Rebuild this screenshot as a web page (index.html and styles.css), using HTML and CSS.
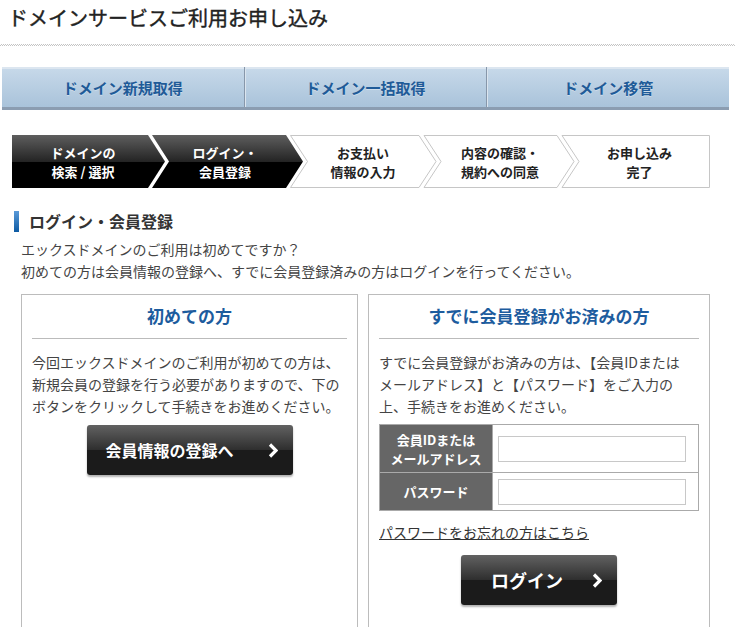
FILE: index.html
```html
<!DOCTYPE html>
<html lang="ja">
<head>
<meta charset="utf-8">
<title>ドメインサービスご利用お申し込み</title>
<link rel="stylesheet" href="styles.css">
</head>
<body>
<div class="page">
  <h1 class="page-title">ドメインサービスご利用お申し込み</h1>
  <div class="dots"></div>

  <nav class="tabs">
    <a class="tab" href="#">ドメイン新規取得</a>
    <a class="tab" href="#">ドメイン一括取得</a>
    <a class="tab" href="#">ドメイン移管</a>
  </nav>

  <div class="steps">
    <svg class="steps-bg" width="698" height="53" viewBox="0 0 698 53">
      <defs>
        <linearGradient id="stepDark" x1="0" y1="0" x2="0" y2="1">
          <stop offset="0" stop-color="#5e5e5e"/>
          <stop offset="0.5" stop-color="#242424"/>
          <stop offset="0.5" stop-color="#000"/>
          <stop offset="1" stop-color="#000"/>
        </linearGradient>
      </defs>
      <polygon points="0,0 136,0 153,26.5 136,53 0,53" fill="url(#stepDark)"/>
      <polygon points="140,0 274,0 291,26.5 274,53 140,53 157,26.5" fill="url(#stepDark)"/>
      <g fill="#fff" stroke="#c6c6c6">
        <polygon points="278.5,0.5 407,0.5 424,26.5 407,52.5 278.5,52.5 295.5,26.5"/>
        <polygon points="412,0.5 545,0.5 562,26.5 545,52.5 412,52.5 429,26.5"/>
        <polygon points="550,0.5 697.5,0.5 697.5,52.5 550,52.5 567,26.5"/>
      </g>
    </svg>
    <ol class="step-list">
      <li class="step is-done"><span class="step-line">ドメインの</span><span class="step-line">検索 / 選択</span></li>
      <li class="step is-done"><span class="step-line">ログイン・</span><span class="step-line">会員登録</span></li>
      <li class="step"><span class="step-line">お支払い</span><span class="step-line">情報の入力</span></li>
      <li class="step"><span class="step-line">内容の確認・</span><span class="step-line">規約への同意</span></li>
      <li class="step"><span class="step-line">お申し込み</span><span class="step-line">完了</span></li>
    </ol>
  </div>

  <h2 class="section-title">ログイン・会員登録</h2>
  <p class="intro">エックスドメインのご利用は初めてですか？<br>初めての方は会員情報の登録へ、すでに会員登録済みの方はログインを行ってください。</p>

  <div class="cols">
    <section class="box box-new">
      <h3 class="box-title">初めての方</h3>
      <p class="box-text">今回エックスドメインのご利用が初めての方は、<br>新規会員の登録を行う必要がありますので、下の<br>ボタンをクリックして手続きをお進めください。</p>
      <div class="btn-row">
        <a class="btn btn-register" href="#"><span>会員情報の登録へ</span><svg class="chev" width="10" height="15" viewBox="0 0 10 15"><polyline points="2,1.5 8,7.5 2,13.5" fill="none" stroke="#fff" stroke-width="3.2"/></svg></a>
      </div>
    </section>

    <section class="box box-member">
      <h3 class="box-title">すでに会員登録がお済みの方</h3>
      <p class="box-text">すでに会員登録がお済みの方は、【会員IDまたは<br>メールアドレス】と【パスワード】をご入力の<br>上、手続きをお進めください。</p>
      <table class="login-table">
        <tr class="row-id">
          <th><span class="th-line">会員IDまたは</span><span class="th-line">メールアドレス</span></th>
          <td><input class="field" type="text"></td>
        </tr>
        <tr class="row-pw">
          <th>パスワード</th>
          <td><input class="field" type="password"></td>
        </tr>
      </table>
      <p class="forgot-line"><a class="forgot" href="#">パスワードをお忘れの方はこちら</a></p>
      <div class="btn-row btn-row-login">
        <a class="btn btn-login" href="#"><span>ログイン</span><svg class="chev" width="10" height="15" viewBox="0 0 10 15"><polyline points="2,1.5 8,7.5 2,13.5" fill="none" stroke="#fff" stroke-width="3.2"/></svg></a>
      </div>
    </section>
  </div>
</div>
</body>
</html>
```

FILE: styles.css
```css
* {
  box-sizing: border-box;
}

body {
  margin: 0;
  background: #fff;
  color: #333;
  font-family: "Noto Sans CJK JP", "Noto Sans", sans-serif;
}

.page {
  height: 627px;
  overflow: hidden;
}

.page-title {
  margin: 0;
  padding: 3px 0 0 8px;
  font-size: 20px;
  line-height: 30px;
  font-weight: normal;
  color: #222;
  -webkit-text-stroke: 0.4px #222;
}

.dots {
  margin-top: 11px;
  width: 735px;
  height: 2px;
  background: conic-gradient(#c4c4c4 25%, #fff 0 50%, #c4c4c4 0 75%, #fff 0);
  background-size: 2px 2px;
}

/* tabs */
.tabs {
  display: flex;
  margin: 21px 0 0 2px;
  width: 727px;
  height: 43px;
  border-bottom: 3px solid #8b9db1;
  background: linear-gradient(#dce6f0 0, #dce6f0 2px, #c6d8e9 2px, #a9c3da 100%);
}

.tab {
  flex: 1;
  display: flex;
  align-items: center;
  justify-content: center;
  font-size: 15px;
  font-weight: bold;
  color: #1f5b98;
  text-decoration: none;
  text-shadow: 0 1px 0 rgba(255, 255, 255, 0.35);
}

.tab + .tab {
  border-left: 1px solid #8797aa;
  box-shadow: inset 1px 0 0 #dbe5ef;
}

/* steps */
.steps {
  display: grid;
  margin: 25px 0 0 12px;
  width: 698px;
  height: 53px;
}

.steps-bg,
.step-list {
  grid-area: 1 / 1;
}

.step-list {
  display: grid;
  grid-template-columns: 142px 142px 134px 140px 139px;
  margin: 0;
  padding: 0;
  list-style: none;
}

.step {
  display: flex;
  flex-direction: column;
  align-items: center;
  justify-content: center;
  text-align: center;
  font-size: 13px;
  font-weight: bold;
  color: #222;
}

.step-line {
  display: block;
  height: 19px;
  line-height: 19px;
  white-space: nowrap;
}

.step.is-done {
  color: #fff;
}

/* section heading */
.section-title {
  display: flex;
  align-items: center;
  gap: 10px;
  margin: 22px 0 0 14px;
  font-size: 16px;
  line-height: 22px;
  font-weight: bold;
  color: #333;
}

.section-title::before {
  content: "";
  width: 5px;
  height: 21px;
  background: linear-gradient(#5a9ad8, #0d5aa3);
}

.intro {
  margin: 6px 0 0 21px;
  font-size: 14px;
  line-height: 22px;
  color: #444;
}

/* boxes */
.cols {
  display: flex;
  gap: 10px;
  margin: 12px 0 0 21px;
}

.box {
  height: 360px;
  padding: 0 10px;
  border: 1px solid #bcbcbc;
}

.box-new {
  width: 337px;
}

.box-member {
  width: 342px;
}

.box-title {
  margin: 0;
  padding: 9px 0 10px;
  border-bottom: 1px solid #bbb;
  text-align: center;
  font-size: 17px;
  line-height: 24px;
  font-weight: bold;
  color: #1d5c9e;
}

.box-text {
  margin: 12px 0 0;
  font-size: 14px;
  line-height: 22px;
  color: #444;
}

/* buttons */
.btn-row {
  display: flex;
  justify-content: center;
  margin-top: 8px;
}

.btn {
  display: flex;
  align-items: center;
  height: 50px;
  border-radius: 3px;
  background: linear-gradient(#626262, #2e2e2e 50%, #1b1b1b 50%, #1b1b1b);
  box-shadow: 0 2px 2px rgba(0, 0, 0, 0.3);
  color: #fff;
  font-weight: bold;
  text-decoration: none;
}

.btn-register {
  width: 206px;
  padding-left: 19px;
  gap: 34px;
  font-size: 16px;
}

.btn-login {
  width: 156px;
  padding-left: 30px;
  gap: 29px;
  font-size: 18px;
}

.chev {
  display: block;
}

/* login table */
.login-table {
  margin-top: 7px;
  width: 100%;
  border-collapse: collapse;
}

.login-table th,
.login-table td {
  border: 1px solid #aaa;
  padding: 0;
}

.login-table th {
  width: 113px;
  background: #666;
  color: #fff;
  font-size: 13px;
  line-height: 19px;
  font-weight: bold;
  text-align: center;
}

.th-line {
  display: block;
  height: 19px;
  white-space: nowrap;
}

.login-table td {
  padding-left: 5px;
  background: #fff;
}

.row-id th {
  height: 48px;
}

.row-pw th {
  height: 38px;
}

.field {
  display: block;
  width: 188px;
  height: 26px;
  margin: 0;
  border: 1px solid #c8c8c8;
  background: #fff;
}

.forgot-line {
  margin: 10px 0 0;
  font-size: 14px;
  line-height: 22px;
}

.forgot {
  color: #333;
  text-decoration: underline;
}

.btn-row-login {
  margin-top: 12px;
}
```
